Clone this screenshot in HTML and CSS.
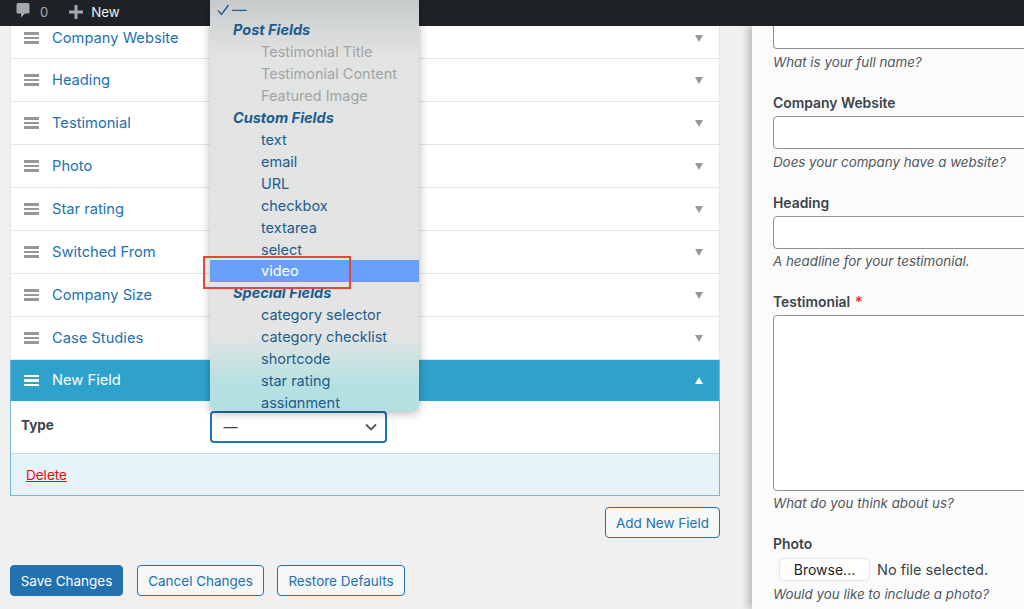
FILE: index.html
```html
<!DOCTYPE html>
<html lang="en">
<head>
<meta charset="utf-8">
<title>Form fields</title>
<link rel="stylesheet" href="styles.css">
</head>
<body>
<header class="topbar">
  <svg class="bar-icon" width="14" height="15" viewBox="0 0 14 15"><path d="M2 0h10a1.500 1.500 0 0 1 1.500 1.500v7.500A1.500 1.500 0 0 1 12 10.500H9L5 14.500V10.500H2A1.500 1.500 0 0 1 .5 9V1.500A1.500 1.500 0 0 1 2 0z" fill="#a7aaad"/></svg>
  <span class="bar-count">0</span>
  <svg class="bar-plus" width="14" height="14" viewBox="0 0 14 14"><path d="M5.500 0h3v5.500H14v3H8.500V14h-3V8.500H0v-3h5.500z" fill="#a7aaad"/></svg>
  <span class="bar-new">New</span>
</header>
<div class="page">
  <main class="main">
    <section class="field-list">
      <div class="row row-first"><span class="grip"><i></i><i></i><i></i></span><a class="row-title">Company Website</a><span class="caret"></span></div>
      <div class="row"><span class="grip"><i></i><i></i><i></i></span><a class="row-title">Heading</a><span class="caret"></span></div>
      <div class="row"><span class="grip"><i></i><i></i><i></i></span><a class="row-title">Testimonial</a><span class="caret"></span></div>
      <div class="row"><span class="grip"><i></i><i></i><i></i></span><a class="row-title">Photo</a><span class="caret"></span></div>
      <div class="row"><span class="grip"><i></i><i></i><i></i></span><a class="row-title">Star rating</a><span class="caret"></span></div>
      <div class="row"><span class="grip"><i></i><i></i><i></i></span><a class="row-title">Switched From</a><span class="caret"></span></div>
      <div class="row"><span class="grip"><i></i><i></i><i></i></span><a class="row-title">Company Size</a><span class="caret"></span></div>
      <div class="row"><span class="grip"><i></i><i></i><i></i></span><a class="row-title">Case Studies</a><span class="caret"></span></div>
      <div class="open-field">
        <div class="row row-open"><span class="grip"><i></i><i></i><i></i></span><a class="row-title">New Field</a><span class="caret caret-up"></span></div>
        <div class="type-row">
          <span class="type-label">Type</span>
          <div class="select"><span class="select-value">—</span>
            <svg width="12" height="8" viewBox="0 0 12 8"><path d="M1 1.500l5 5 5-5" fill="none" stroke="#50575e" stroke-width="1.800"/></svg>
          </div>
        </div>
        <div class="delete-row"><a class="delete">Delete</a></div>
      </div>
    </section>
    <div class="add-row"><button class="btn">Add New Field</button></div>
    <div class="actions">
      <button class="btn btn-primary">Save Changes</button>
      <button class="btn">Cancel Changes</button>
      <button class="btn">Restore Defaults</button>
    </div>
  </main>
  <aside class="preview">
    <div class="input input-cut"></div>
    <p class="hint">What is your full name?</p>
    <label class="label label-1">Company Website</label>
    <div class="input"></div>
    <p class="hint">Does your company have a website?</p>
    <label class="label label-2">Heading</label>
    <div class="input"></div>
    <p class="hint">A headline for your testimonial.</p>
    <label class="label label-3">Testimonial <span class="req">*</span></label>
    <div class="input textarea"></div>
    <p class="hint">What do you think about us?</p>
    <label class="label label-4">Photo</label>
    <div class="file"><span class="browse">Browse...</span><span class="no-file">No file selected.</span></div>
    <p class="hint">Would you like to include a photo?</p>
  </aside>
</div>
<div class="menu">
  <div class="opt opt-top"><svg width="13" height="12" viewBox="0 0 13 12"><path d="M1 6.500l3.500 4L11.500 1" fill="none" stroke="#1d5c8c" stroke-width="1.400"/></svg><span>—</span></div>
  <div class="group">Post Fields</div>
  <div class="opt off">Testimonial Title</div>
  <div class="opt off">Testimonial Content</div>
  <div class="opt off">Featured Image</div>
  <div class="group">Custom Fields</div>
  <div class="opt">text</div>
  <div class="opt">email</div>
  <div class="opt">URL</div>
  <div class="opt">checkbox</div>
  <div class="opt">textarea</div>
  <div class="opt">select</div>
  <div class="opt active">video</div>
  <div class="group">Special Fields</div>
  <div class="opt">category selector</div>
  <div class="opt">category checklist</div>
  <div class="opt">shortcode</div>
  <div class="opt">star rating</div>
  <div class="opt">assignment</div>
</div>
<div class="callout"></div>
</body>
</html>
```
FILE: styles.css
```css
* { box-sizing: border-box; }
html, body { margin: 0; height: 609px; overflow: hidden; }
body {
  position: relative;
  background: #f0f0f1;
  font-family: Inter, "Liberation Sans", sans-serif;
  font-size: 14px;
  color: #3c434a;
}
.topbar {
  height: 26px;
  background: #1d2327;
  display: flex;
  align-items: center;
  padding-left: 16px;
  color: #a7aaad;
  font-size: 13px;
}
.bar-icon { margin-top: -5px; }
.bar-count { margin-left: 10px; margin-top: -3px; }
.bar-plus { margin-left: 21px; margin-top: -3px; }
.bar-new { margin-left: 8px; margin-top: -3px; color: #f0f0f1; font-size: 13.300px; }
.page { display: flex; height: 583px; }
.main { width: 752px; padding-left: 10px; flex: none; }
.field-list { width: 710px; }
.row {
  height: 43px;
  background: #fff;
  border: 1px solid #e4e5e7;
  border-top: 0;
  display: flex;
  align-items: center;
  padding: 0 16px 0 13px;
}
.row-first { height: 33px; padding-bottom: 8px; }
.grip { display: flex; flex-direction: column; gap: 2px; width: 15px; margin-right: 13px; }
.grip i { display: block; height: 2.400px; background: #969799; }
.row-title { color: #2271b1; font-size: 14.700px; flex: 1; margin-bottom: 1px; }
.caret { width: 0; height: 0; border: 4.500px solid transparent; border-top: 7px solid #969799; border-bottom: 0; }
.open-field { border: 1px solid #72b8d8; border-top: 0; }
.row-open { height: 41px; background: #2ea2cc; border: 0; padding: 0 16px 0 13px; }
.row-open .grip i { background: #fff; }
.row-open .row-title { color: #fff; }
.caret-up { border: 4.500px solid transparent; border-bottom: 7px solid #fff; border-top: 0; }
.type-row { height: 53px; background: #fff; display: flex; align-items: center; padding: 0 0 5px 10px; border-bottom: 1px solid #b5dff0; }
.type-label { font-weight: 700; font-size: 13.500px; width: 188.500px; flex: none; }
.select {
  width: 177.500px; height: 32px; margin-top: 4px;
  border: 2px solid #2271b1; border-radius: 4px; background: #fff;
  display: flex; align-items: center; justify-content: space-between;
  padding: 0 8px 0 12px; font-size: 14px;
}
.delete-row { height: 41px; background: #e5f3f9; display: flex; align-items: center; padding-left: 15px; }
.delete { color: #f00; text-decoration: underline; font-size: 13.500px; }
.add-row { width: 710px; display: flex; justify-content: flex-end; margin-top: 11px; }
.btn {
  font: inherit; font-size: 13.500px; color: #2271b1;
  background: #f6f7f7; border: 1px solid #2271b1; border-radius: 4px;
  height: 31px; padding: 0;
}
.add-row .btn { width: 115px; }
.actions { display: flex; gap: 13px; margin-top: 27px; }
.btn-primary { background: #2271b1; color: #fff; width: 113px; margin-right: 1px; }
.actions .btn:nth-child(2) { width: 127px; }
.actions .btn:nth-child(3) { width: 128px; }
.preview {
  flex: 1; background: #fbfbfb; padding-left: 21px;
  box-shadow: -4px 0 7px rgba(0,0,0,.22);
  overflow: hidden; position: relative;
}
.input { width: 300px; height: 33px; border: 1px solid #8c8f94; border-radius: 4px; background: #fff; }
.input-cut { height: 24px; margin-top: -1px; border-top: 0; border-radius: 0 0 4px 4px; }
.textarea { height: 175.500px; }
.hint { margin: 4.500px 0 0; font-style: italic; font-size: 13.350px; line-height: 17px; color: #50575e; }
.label { display: block; font-weight: 600; font-size: 13.900px; line-height: 16px; margin-bottom: 5px; }
.label-1 { margin-top: 24.500px; }
.label-2 { margin-top: 24px; }
.label-3 { margin-top: 24px; }
.label-4 { margin-top: 23.500px; }
.req { color: #d63638; font-size: 15px; margin-left: 1px; }
.file { display: flex; align-items: center; height: 25px; margin-bottom: 2px; }
.browse {
  margin-left: 7px; width: 89px; height: 21px; background: #fff; border-radius: 4px;
  box-shadow: 0 0 2px rgba(0,0,0,.3); color: #1d2327;
  display: flex; align-items: center; justify-content: center; font-size: 14px;
}
.no-file { margin-left: 8px; font-size: 14.500px; }
.menu {
  position: absolute; left: 210px; top: 0; width: 209px; height: 411px; overflow: hidden;
  border-radius: 0 0 6px 6px;
  background: linear-gradient(#c6cacb 0, #e2e3e3 55px, #e4e4e4 335px, #b5e0e1 385px, #b5e0e1 100%);
  box-shadow: 0 2px 10px rgba(0,0,0,.3);
  color: #1d5c8c; font-size: 14.500px;
}
.menu::after { content: ""; position: absolute; left: 0; right: 0; bottom: 0; height: 3px; background: #b5e0e1; }
.opt, .group { height: 22px; line-height: 22px; padding-left: 51px; white-space: nowrap; }
.opt-top { height: 19px; padding-left: 7px; display: flex; align-items: center; gap: 2px; }
.group { padding-left: 23px; font-weight: 700; font-style: italic; }
.off { color: #a1a3a4; }
.active { background: #699ff8; color: #fff; margin-top: -1px; }
.callout { position: absolute; left: 203px; top: 256px; width: 148px; height: 33px; border: 2.500px solid #e8472f; }
```
